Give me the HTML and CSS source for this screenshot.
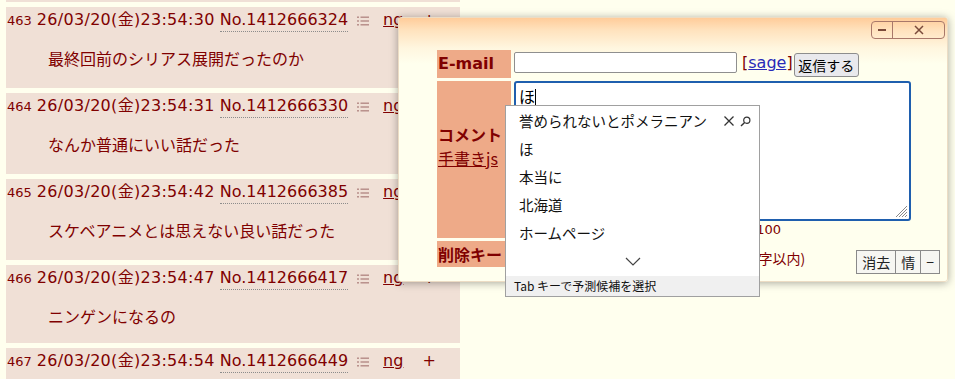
FILE: index.html
```html
<!DOCTYPE html>
<html lang="ja">
<head>
<meta charset="utf-8">
<title>reply</title>
<link rel="stylesheet" href="styles.css">
</head>
<body>
<div class="page">
  <div class="thread">
    <div class="rsc rsc-partial"></div>
    <div class="rsc">
      <div class="rsc-head"><span class="rsc-num">463</span><span class="rsc-date">26/03/20(金)23:54:30</span><span class="rsc-no">No.1412666324</span><svg class="rsc-menu" width="12" height="10" viewBox="0 0 12 10"><rect x="0" y="0.5" width="2" height="1.4"/><rect x="0" y="4.3" width="2" height="1.4"/><rect x="0" y="8.1" width="2" height="1.4"/><rect x="3.5" y="0.5" width="8.5" height="1.4"/><rect x="3.5" y="4.3" width="8.5" height="1.4"/><rect x="3.5" y="8.1" width="8.5" height="1.4"/></svg><a class="rsc-ng" href="#">ng</a><span class="rsc-plus">+</span></div>
      <div class="rsc-body">最終回前のシリアス展開だったのか</div>
    </div>
    <div class="rsc">
      <div class="rsc-head"><span class="rsc-num">464</span><span class="rsc-date">26/03/20(金)23:54:31</span><span class="rsc-no">No.1412666330</span><svg class="rsc-menu" width="12" height="10" viewBox="0 0 12 10"><rect x="0" y="0.5" width="2" height="1.4"/><rect x="0" y="4.3" width="2" height="1.4"/><rect x="0" y="8.1" width="2" height="1.4"/><rect x="3.5" y="0.5" width="8.5" height="1.4"/><rect x="3.5" y="4.3" width="8.5" height="1.4"/><rect x="3.5" y="8.1" width="8.5" height="1.4"/></svg><a class="rsc-ng" href="#">ng</a><span class="rsc-plus">+</span></div>
      <div class="rsc-body">なんか普通にいい話だった</div>
    </div>
    <div class="rsc">
      <div class="rsc-head"><span class="rsc-num">465</span><span class="rsc-date">26/03/20(金)23:54:42</span><span class="rsc-no">No.1412666385</span><svg class="rsc-menu" width="12" height="10" viewBox="0 0 12 10"><rect x="0" y="0.5" width="2" height="1.4"/><rect x="0" y="4.3" width="2" height="1.4"/><rect x="0" y="8.1" width="2" height="1.4"/><rect x="3.5" y="0.5" width="8.5" height="1.4"/><rect x="3.5" y="4.3" width="8.5" height="1.4"/><rect x="3.5" y="8.1" width="8.5" height="1.4"/></svg><a class="rsc-ng" href="#">ng</a><span class="rsc-plus">+</span></div>
      <div class="rsc-body">スケベアニメとは思えない良い話だった</div>
    </div>
    <div class="rsc rsc-short">
      <div class="rsc-head"><span class="rsc-num">466</span><span class="rsc-date">26/03/20(金)23:54:47</span><span class="rsc-no">No.1412666417</span><svg class="rsc-menu" width="12" height="10" viewBox="0 0 12 10"><rect x="0" y="0.5" width="2" height="1.4"/><rect x="0" y="4.3" width="2" height="1.4"/><rect x="0" y="8.1" width="2" height="1.4"/><rect x="3.5" y="0.5" width="8.5" height="1.4"/><rect x="3.5" y="4.3" width="8.5" height="1.4"/><rect x="3.5" y="8.1" width="8.5" height="1.4"/></svg><a class="rsc-ng" href="#">ng</a><span class="rsc-plus">+</span></div>
      <div class="rsc-body">ニンゲンになるの</div>
    </div>
    <div class="rsc">
      <div class="rsc-head"><span class="rsc-num">467</span><span class="rsc-date">26/03/20(金)23:54:54</span><span class="rsc-no">No.1412666449</span><svg class="rsc-menu" width="12" height="10" viewBox="0 0 12 10"><rect x="0" y="0.5" width="2" height="1.4"/><rect x="0" y="4.3" width="2" height="1.4"/><rect x="0" y="8.1" width="2" height="1.4"/><rect x="3.5" y="0.5" width="8.5" height="1.4"/><rect x="3.5" y="4.3" width="8.5" height="1.4"/><rect x="3.5" y="8.1" width="8.5" height="1.4"/></svg><a class="rsc-ng" href="#">ng</a><span class="rsc-plus">+</span></div>
    </div>
  </div>

  <div class="win">
    <div class="win-bar">
      <div class="win-btns">
        <span class="win-btn win-min"><svg width="10" height="10" viewBox="0 0 10 10"><rect x="1" y="4" width="8" height="2" fill="#7a4a3a"/></svg></span>
        <span class="win-btn win-close"><svg width="12" height="12" viewBox="0 0 12 12"><path d="M2 2 L10 10 M10 2 L2 10" stroke="#7a4a3a" stroke-width="1.5" fill="none"/></svg></span>
      </div>
    </div>
    <div class="form">
      <div class="lbl lbl-mail">E-mail</div>
      <div class="cell cell-mail">
        <span class="inp inp-mail"></span>
        <span class="sage">[<a href="#">sage</a>]</span>
        <span class="btn btn-reply">返信する</span>
      </div>
      <div class="lbl lbl-com">
        <span class="lbl-com-title">コメント</span>
        <a class="lbl-com-link" href="#">手書きjs</a>
      </div>
      <div class="cell cell-com">
        <div class="ta">ほ<span class="caret"></span>
          <svg class="grip" width="12" height="12" viewBox="0 0 12 12"><path d="M11 3 L3 11 M11 6 L6 11 M11 9 L9 11 M11 0 L0 11" stroke="#8a8a8a" stroke-width="1" fill="none"/></svg>
        </div>
        <div class="counter">0/100</div>
      </div>
      <div class="lbl lbl-del">削除キー</div>
      <div class="cell cell-del">
        <span class="inp inp-del"></span>
        <span class="note">(削除用.英数字で8文字以内)</span>
        <div class="tools">
          <span class="tool">消去</span><span class="tool">情</span><span class="tool">−</span>
        </div>
      </div>
    </div>
  </div>

  <div class="ime">
    <ul class="ime-list">
      <li class="ime-item ime-first"><span>誉められないとポメラニアン</span>
        <span class="ime-icons">
          <svg width="12" height="12" viewBox="0 0 12 12"><path d="M1.5 1.5 L10.5 10.5 M10.5 1.5 L1.5 10.5" stroke="#333" stroke-width="1.3" fill="none"/></svg>
          <svg width="11" height="11" viewBox="0 0 11 11"><circle cx="6.8" cy="4.2" r="3.1" stroke="#333" stroke-width="1.2" fill="none"/><path d="M4.6 6.4 L1 10" stroke="#333" stroke-width="1.4"/></svg>
        </span>
      </li>
      <li class="ime-item">ほ</li>
      <li class="ime-item">本当に</li>
      <li class="ime-item">北海道</li>
      <li class="ime-item">ホームページ</li>
    </ul>
    <div class="ime-more"><svg width="16" height="9" viewBox="0 0 16 9"><path d="M1 1 L8 8 L15 1" stroke="#444" stroke-width="1.2" fill="none"/></svg></div>
    <div class="ime-foot">Tab キーで予測候補を選択</div>
  </div>
</div>
</body>
</html>
```

FILE: styles.css
```css
html, body {
  margin: 0;
  padding: 0;
  background: #ffffee;
}

.page {
  position: relative;
  width: 955px;
  height: 379px;
  overflow: hidden;
}

.thread {
  display: flex;
  flex-direction: column;
  gap: 5px;
  padding-left: 6px;
}

.rsc {
  width: 454px;
  height: 81px;
  box-sizing: border-box;
  background: #f0e0d6;
  color: #800000;
  font-family: "DejaVu Sans", "Noto Sans CJK JP", sans-serif;
  flex: none;
}

.rsc-partial {
  margin-top: -79px;
}

.rsc-short {
  height: 78px;
}

.rsc-head {
  display: flex;
  align-items: baseline;
  padding: 3px 0 0 1px;
  height: 20px;
  line-height: 20px;
  font-size: 16px;
  white-space: nowrap;
}

.rsc-num {
  font-size: 13px;
  margin-right: 5px;
}

.rsc-date {
  margin-right: 5px;
  letter-spacing: 0.3px;
}

.rsc-no {
  border-bottom: 1px dotted #8c8c8c;
  padding-bottom: 1px;
}

.rsc-menu {
  fill: #b48a86;
  margin-left: 9px;
  align-self: center;
  margin-top: 1px;
}

.rsc-ng {
  color: #800000;
  margin-left: 14px;
  text-decoration: underline;
}

.rsc-plus {
  margin-left: 19px;
}

.rsc-body {
  margin: 18px 0 0 42px;
  font-family: "Noto Sans CJK JP", sans-serif;
  font-size: 16px;
  line-height: 20px;
}

/* reply window */
.win {
  position: absolute;
  left: 398px;
  top: 17px;
  width: 550px;
  height: 265px;
  box-sizing: border-box;
  border: 1px solid #ecdcc4;
  border-radius: 3px;
  background: linear-gradient(to bottom, #ffcc9a 0px, #ffe2bd 12px, #fff6df 30px, #ffffee 46px);
  box-shadow: 0 1px 8px rgba(0, 0, 0, 0.35);
  font-family: "DejaVu Sans", "Noto Sans CJK JP", sans-serif;
  color: #800000;
}

.win-bar {
  display: flex;
  justify-content: flex-end;
  padding: 3px 2px 0 0;
  height: 18px;
}

.win-btns {
  display: flex;
  border: 1px solid #a8786a;
  border-radius: 4px;
  height: 16px;
}

.win-btn {
  display: flex;
  align-items: center;
  justify-content: center;
  height: 16px;
}

.win-min {
  width: 20px;
  border-right: 1px solid #a8786a;
}

.win-close {
  width: 51px;
}

.form {
  display: grid;
  grid-template-columns: 74px 1fr;
  grid-template-rows: 28px 157px 26px;
  column-gap: 3px;
  row-gap: 3px;
  margin: 11px 0 0 38px;
}

.lbl {
  background: #eeaa88;
  color: #800000;
  font-weight: bold;
  font-size: 16px;
  padding-left: 1px;
}

.lbl-mail {
  line-height: 28px;
}

.lbl-com {
  display: flex;
  flex-direction: column;
  padding-top: 43px;
  box-sizing: border-box;
}

.lbl-com-title {
  line-height: 20px;
  font-family: "Noto Sans CJK JP", sans-serif;
  font-weight: bold;
}

.lbl-com-link {
  font-weight: normal;
  color: #800000;
  line-height: 22px;
  margin-top: 3px;
  font-family: "Noto Sans CJK JP", "DejaVu Sans", sans-serif;
}

.lbl-del {
  line-height: 26px;
  font-family: "Noto Sans CJK JP", sans-serif;
  font-weight: bold;
}

.cell-mail {
  display: flex;
  align-items: flex-start;
}

.inp {
  display: block;
  box-sizing: border-box;
  background: #fff;
  border: 1px solid #8f8f8f;
  border-radius: 2px;
}

.inp-mail {
  width: 223px;
  height: 21px;
  margin-top: 2px;
}

.sage {
  margin-left: 5px;
  margin-top: 3px;
  font-size: 16px;
  line-height: 20px;
  color: #800000;
}

.sage a {
  color: #2a2ab8;
}

.btn {
  display: block;
  box-sizing: border-box;
  border: 1px solid #8d8d8d;
  border-radius: 3px;
  background: #e9e9ed;
  color: #000;
  font-family: "Noto Sans CJK JP", sans-serif;
  font-size: 14px;
}

.btn-reply {
  margin-left: 1px;
  margin-top: 3px;
  width: 65px;
  height: 24px;
  line-height: 22px;
  text-align: center;
}

.cell-com {
  display: flex;
  flex-direction: column;
}

.ta {
  position: relative;
  width: 397px;
  height: 140px;
  box-sizing: border-box;
  border: 2px solid #1f5fae;
  border-radius: 3px;
  background: #fff;
  color: #000;
  font-family: "Noto Sans CJK JP", sans-serif;
  font-size: 16px;
  line-height: 22px;
  padding: 2px 3px;
}

.caret {
  display: inline-block;
  width: 1px;
  height: 17px;
  background: #000;
  vertical-align: -3px;
}

.grip {
  position: absolute;
  right: 1px;
  bottom: 1px;
}

.counter {
  width: 267px;
  text-align: right;
  font-size: 13px;
  line-height: 16px;
  margin-top: 1px;
}

.cell-del {
  display: flex;
  align-items: flex-start;
}

.inp-del {
  width: 112px;
  height: 21px;
  margin-top: 2px;
}

.note {
  margin-left: 4px;
  margin-top: 8px;
  font-family: "Noto Sans CJK JP", "DejaVu Sans", sans-serif;
  font-size: 14px;
  line-height: 18px;
}

.tools {
  display: flex;
  margin-left: auto;
  margin-right: 7px;
  margin-top: 9px;
  border: 1px solid #8a8a8a;
  background: #f6f6f2;
}

.tool {
  height: 22px;
  line-height: 22px;
  padding: 0 5px;
  font-family: "Noto Sans CJK JP", sans-serif;
  font-size: 14px;
  color: #222;
  border-left: 1px solid #8a8a8a;
}

.tool:first-child {
  border-left: none;
}

/* IME prediction popup */
.ime {
  position: absolute;
  left: 505px;
  top: 105px;
  width: 255px;
  height: 192px;
  box-sizing: border-box;
  border: 1px solid #a0a0a0;
  background: #fff;
  font-family: "Noto Sans CJK JP", sans-serif;
  color: #111;
  display: flex;
  flex-direction: column;
}

.ime-list {
  list-style: none;
  margin: 0;
  padding: 1px 0 0 0;
}

.ime-item {
  height: 28px;
  line-height: 28px;
  font-size: 14.5px;
  padding-left: 13px;
  display: flex;
  align-items: center;
}

.ime-icons {
  margin-left: auto;
  margin-right: 8px;
  display: flex;
  align-items: center;
  gap: 5px;
}

.ime-more {
  flex: 1;
  display: flex;
  align-items: center;
  justify-content: center;
  padding-bottom: 1px;
}

.ime-foot {
  height: 20px;
  line-height: 20px;
  background: #f0f0f0;
  font-size: 12px;
  padding-left: 8px;
  color: #111;
}
```
